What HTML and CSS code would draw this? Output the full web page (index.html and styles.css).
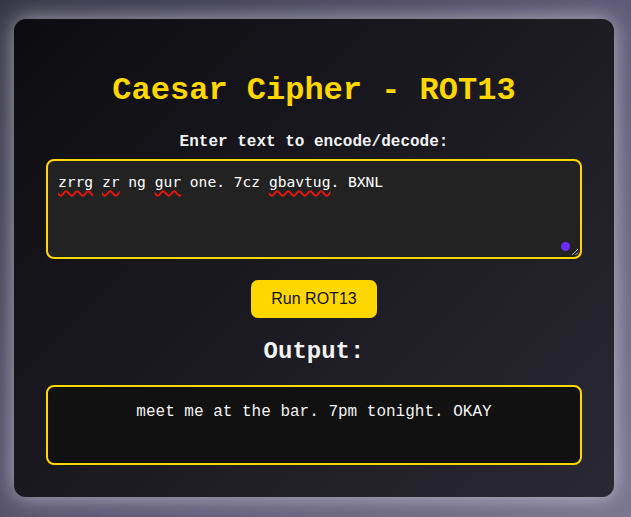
FILE: index.html
```html
<!DOCTYPE html>
<html lang="en">
<head>
<meta charset="utf-8">
<title>Caesar Cipher - ROT13</title>
<link rel="stylesheet" href="styles.css">
</head>
<body>
<main class="card">
  <h1 class="title">Caesar Cipher - ROT13</h1>
  <label class="label" for="input">Enter text to encode/decode:</label>
  <div class="input-wrap">
    <div class="input" id="input" role="textbox" aria-multiline="true"><span class="miss">zrrg</span> <span class="miss">zr</span> ng <span class="miss">gur</span> one. 7cz <span class="miss">gbavtug</span>. BXNL</div>
    <span class="dot"></span>
    <svg class="grip" width="8" height="8" viewBox="0 0 8 8"><path d="M7 1 L1 7 M7 4.5 L4.5 7" stroke="#bbb" stroke-width="1"/></svg>
  </div>
  <button class="run" type="button">Run ROT13</button>
  <h2 class="out-title">Output:</h2>
  <div class="output">meet me at the bar. 7pm tonight. OKAY</div>
</main>
</body>
</html>
```

FILE: styles.css
```css
html, body {
  margin: 0;
  height: 100%;
}
body {
  background: linear-gradient(135deg, #383748 0%, #5f5a78 55%, #7a7591 100%);
  font-family: "Liberation Mono", "Courier New", monospace;
  padding: 19px 17px 0 14px;
  box-sizing: border-box;
}
.card {
  width: 600px;
  box-sizing: border-box;
  padding: 30px 32px 32px;
  border-radius: 12px;
  background: linear-gradient(135deg, #0c0c10 0%, #1b1a21 50%, #2a2833 100%);
  box-shadow: 0 0 22px rgba(255, 255, 255, 0.55);
  display: flex;
  flex-direction: column;
  align-items: center;
}
.title {
  margin: 23px 0 0;
  font-size: 32px;
  font-weight: bold;
  color: #ffd700;
  line-height: 37px;
}
.label {
  margin-top: 24px;
  font-size: 16px;
  font-weight: bold;
  color: #f2f2f2;
  line-height: 18px;
}
.input-wrap {
  position: relative;
  margin-top: 8px;
  width: 100%;
}
.input {
  box-sizing: border-box;
  width: 100%;
  height: 100px;
  background: #222222;
  border: 2px solid #ffd700;
  border-radius: 8px;
  padding: 12px 10px;
  font-family: "DejaVu Sans Mono", monospace;
  font-size: 14.6px;
  line-height: 18px;
  color: #ffffff;
}
.miss {
  text-decoration: underline wavy #e8150f;
  text-decoration-thickness: 1.5px;
  text-underline-offset: 3px;
}
.dot {
  position: absolute;
  right: 12px;
  bottom: 8px;
  width: 9px;
  height: 9px;
  border-radius: 50%;
  background: #6a2cff;
}
.grip {
  position: absolute;
  right: 3px;
  bottom: 3px;
}
.run {
  margin-top: 21px;
  background: #ffd700;
  color: #111;
  border: none;
  border-radius: 7px;
  padding: 10px 20px;
  font-family: "Liberation Sans", Arial, sans-serif;
  font-size: 16px;
  line-height: 18px;
  cursor: pointer;
}
.out-title {
  margin: 20px 0 0;
  font-size: 24px;
  font-weight: bold;
  color: #f2f2f2;
  line-height: 28px;
}
.output {
  box-sizing: border-box;
  margin-top: 19px;
  width: 100%;
  height: 80px;
  background: #111111;
  border: 2px solid #ffd700;
  border-radius: 8px;
  padding: 16px 10px 14px;
  text-align: center;
  font-size: 16px;
  line-height: 18px;
  color: #f4f4f4;
}
```
